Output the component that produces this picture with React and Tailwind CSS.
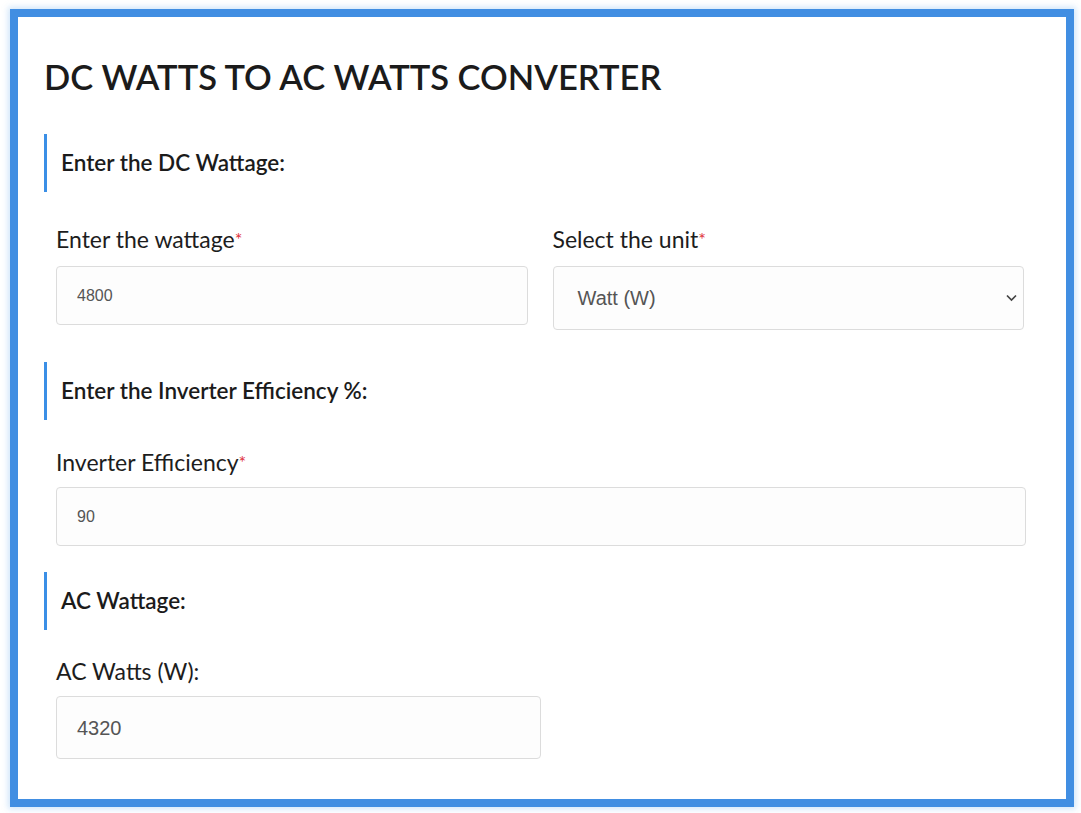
import React from 'react';

const Section = ({ title }) => (
  <div className="ml-[26px] flex h-[58px] items-center border-l-[3px] border-[#3b8fe6] pl-[14px]">
    <h3 className="text-[22.5px] font-semibold text-[#1b1b1b]">{title}</h3>
  </div>
);

const Label = ({ children, required }) => (
  <label className="block text-[23px] leading-[27px] text-[#1d1d1d]">
    {children}
    {required && <span className="text-[#e0323c] text-[18px] align-top">*</span>}
  </label>
);

const Field = ({ value, className = '', textClass = 'text-[16px]' }) => (
  <div
    className={`flex items-center rounded-[4px] border border-[#dcdcdc] bg-[#fdfdfd] px-5 text-[#555] ${textClass} ${className}`}
    style={{ fontFamily: 'Arial, "Liberation Sans", sans-serif' }}
  >
    {value}
  </div>
);

export default function App() {
  return (
    <div className="min-h-[813px] bg-white pt-[9px] pl-[10px]" style={{ fontFamily: 'Lato, "Open Sans", sans-serif' }}>
      <div className="h-[798px] w-[1064px] border-[8px] border-[#418ee2] bg-white shadow-[0_0_6px_2px_rgba(120,180,240,0.35)]">
        <h1 className="mt-[39px] ml-[26px] text-[34.5px] leading-[41px] font-semibold text-[#1b1b1b]">
          DC WATTS TO AC WATTS CONVERTER
        </h1>

        <div className="mt-[37px]">
          <Section title="Enter the DC Wattage:" />
        </div>

        <div className="mt-[34px] ml-[38px] grid w-[968px] grid-cols-2 gap-[25px]">
          <div>
            <Label required>Enter the wattage</Label>
            <Field value="4800" className="mt-[13px] h-[59px]" />
          </div>
          <div>
            <Label required>Select the unit</Label>
            <div className="relative mt-[13px]">
              <Field value="Watt (W)" className="h-[64px] px-6" textClass="text-[20px]" />
              <svg className="absolute right-[7px] top-[28px]" width="11" height="8" viewBox="0 0 11 8" fill="none">
                <path d="M1 1.5 5.5 6 10 1.5" stroke="#444" strokeWidth="1.7" />
              </svg>
            </div>
          </div>
        </div>

        <div className="mt-[32px]">
          <Section title="Enter the Inverter Efficiency %:" />
        </div>

        <div className="mt-[29px] ml-[38px] w-[970px]">
          <Label required>Inverter Efficiency</Label>
          <Field value="90" className="mt-[11px] h-[59px]" />
        </div>

        <div className="mt-[26px]">
          <Section title="AC Wattage:" />
        </div>

        <div className="mt-[28px] ml-[38px] w-[485px]">
          <Label>AC Watts (W):</Label>
          <Field value="4320" className="mt-[11px] h-[63px]" textClass="text-[20px]" />
        </div>
      </div>
    </div>
  );
}
